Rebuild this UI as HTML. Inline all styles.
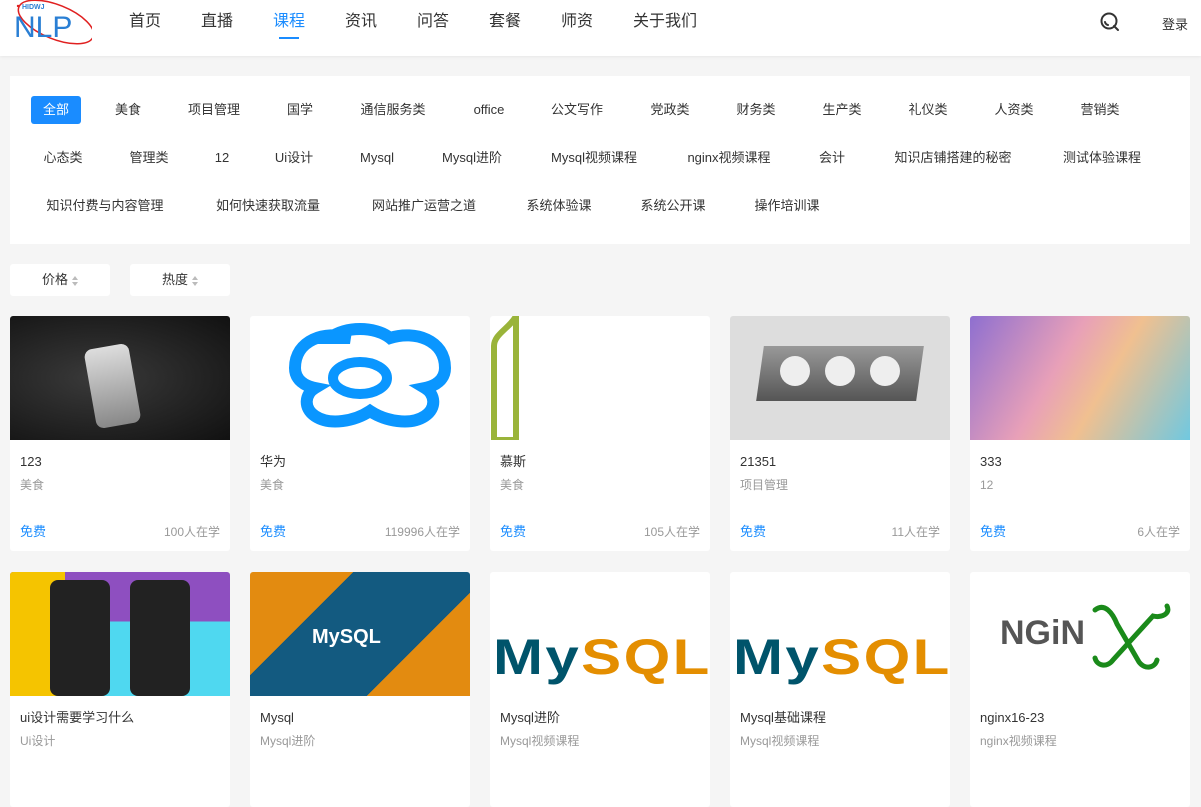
<!DOCTYPE html>
<html><head><meta charset="utf-8"><style>
*{margin:0;padding:0;box-sizing:border-box}
body{width:1201px;height:765px;overflow:hidden;background:#f5f5f5;font-family:"Liberation Sans","Noto Sans CJK SC",sans-serif;color:#333;position:relative}
.hd{position:absolute;left:0;top:0;width:1201px;height:56px;background:#fff;box-shadow:0 1px 3px rgba(0,0,0,.06)}
.nav{position:absolute;top:10px;font-size:16px;line-height:24px;color:#333}
.nav.on{color:#1a8cff}
.panel{position:absolute;left:10px;top:76px;width:1180px;height:168px;background:#fff}
.tag{position:absolute;font-size:13px;color:#333;line-height:28px;height:28px;transform:translateX(-50%);white-space:nowrap}
.tag.on{background:#1a8cff;color:#fff;border-radius:3px;padding:0 12px}
.sort{position:absolute;top:264px;width:100px;height:32px;background:#fff;border-radius:3px;font-size:13px;line-height:32px;text-align:center;color:#333}
.sort i{display:inline-block;vertical-align:middle;margin-left:4px;width:6px;height:10px;position:relative}
.sort i:before,.sort i:after{content:"";position:absolute;left:0;border-left:3px solid transparent;border-right:3px solid transparent}
.sort i:before{top:0;border-bottom:4px solid #bbb}.sort i:after{bottom:0;border-top:4px solid #bbb}
.card{position:absolute;width:220px;height:235px;background:#fff;border-radius:3px;overflow:hidden}
.img{height:124px;position:relative;overflow:hidden}
.t{position:absolute;left:10px;top:137px;font-size:13px;line-height:18px;color:#333}
.c{position:absolute;left:10px;top:161px;font-size:12px;line-height:17px;color:#999}
.f{position:absolute;left:10px;top:207px;font-size:13px;line-height:18px;color:#1a8cff}
.n{position:absolute;right:10px;top:207px;font-size:12px;line-height:18px;color:#999}
</style></head><body>
<div class="hd">
<svg style="position:absolute;left:8px;top:0" width="84" height="48"><ellipse cx="48" cy="22" rx="40" ry="17" fill="none" stroke="#e02020" stroke-width="1.5" transform="rotate(22 48 22)"/><text x="6" y="37" font-family="Liberation Sans" font-size="30" fill="#2a7fd4">NLP</text><text x="14" y="9" font-size="7" fill="#2a7fd4" font-family="Liberation Sans" font-weight="bold">HIDWJ</text><circle cx="10" cy="6" r="1.2" fill="#e02020"/></svg>
<span class="nav" style="left:129px">首页</span><span class="nav" style="left:201px">直播</span><span class="nav on" style="left:273px">课程</span><span class="nav" style="left:345px">资讯</span><span class="nav" style="left:417px">问答</span><span class="nav" style="left:489px">套餐</span><span class="nav" style="left:561px">师资</span><span class="nav" style="left:633px">关于我们</span>
<div style="position:absolute;left:279px;top:37px;width:20px;height:2px;background:#1a8cff"></div>
<svg style="position:absolute;left:1099px;top:11px" width="22" height="22"><circle cx="10" cy="10" r="7.5" fill="none" stroke="#333" stroke-width="2"/><path d="M15 15l4 4M6 11a4 4 0 0 0 3 3" stroke="#333" stroke-width="2" fill="none" stroke-linecap="round"/></svg>
<span style="position:absolute;left:1162px;top:14px;font-size:13px">登录</span>
</div>
<div class="panel">
<span class="tag on" style="left:46px;top:20px">全部</span><span class="tag" style="left:118px;top:20px">美食</span><span class="tag" style="left:204px;top:20px">项目管理</span><span class="tag" style="left:290px;top:20px">国学</span><span class="tag" style="left:383px;top:20px">通信服务类</span><span class="tag" style="left:479px;top:20px">office</span><span class="tag" style="left:567px;top:20px">公文写作</span><span class="tag" style="left:660px;top:20px">党政类</span><span class="tag" style="left:746px;top:20px">财务类</span><span class="tag" style="left:832px;top:20px">生产类</span><span class="tag" style="left:918px;top:20px">礼仪类</span><span class="tag" style="left:1004px;top:20px">人资类</span><span class="tag" style="left:1090px;top:20px">营销类</span>
<span class="tag" style="left:53px;top:68px">心态类</span><span class="tag" style="left:139px;top:68px">管理类</span><span class="tag" style="left:212px;top:68px">12</span><span class="tag" style="left:284px;top:68px">Ui设计</span><span class="tag" style="left:367px;top:68px">Mysql</span><span class="tag" style="left:462px;top:68px">Mysql进阶</span><span class="tag" style="left:584px;top:68px">Mysql视频课程</span><span class="tag" style="left:719px;top:68px">nginx视频课程</span><span class="tag" style="left:822px;top:68px">会计</span><span class="tag" style="left:943px;top:68px">知识店铺搭建的秘密</span><span class="tag" style="left:1092px;top:68px">测试体验课程</span>
<span class="tag" style="left:95px;top:116px">知识付费与内容管理</span><span class="tag" style="left:258px;top:116px">如何快速获取流量</span><span class="tag" style="left:414px;top:116px">网站推广运营之道</span><span class="tag" style="left:549px;top:116px">系统体验课</span><span class="tag" style="left:663px;top:116px">系统公开课</span><span class="tag" style="left:777px;top:116px">操作培训课</span>
</div>
<div class="sort" style="left:10px">价格<i></i></div><div class="sort" style="left:130px">热度<i></i></div>

<div class="card" style="left:10px;top:316px"><div class="img" style="background:radial-gradient(ellipse at 40% 50%,#3a3a3a,#111)"><div style="position:absolute;left:80px;top:30px;width:45px;height:80px;background:linear-gradient(#ddd,#888);border-radius:8px;transform:rotate(-10deg)"></div></div><div class="t">123</div><div class="c">美食</div><div class="f">免费</div><div class="n">100人在学</div></div>
<div class="card" style="left:250px;top:316px"><div class="img"><svg width="220" height="124"><path d="M80 22c15-12 45-12 60 0 25-8 55 2 55 30 0 12-10 18-20 20 10 6 12 20 0 28-15 10-40 5-55-5-15 10-40 15-55 5-12-8-10-22 0-28-10-2-20-8-20-20 0-28 30-38 55-30z" fill="none" stroke="#0a96ff" stroke-width="12"/><ellipse cx="110" cy="62" rx="27" ry="16" fill="none" stroke="#0a96ff" stroke-width="10"/></svg></div><div class="t">华为</div><div class="c">美食</div><div class="f">免费</div><div class="n">119996人在学</div></div>
<div class="card" style="left:490px;top:316px"><div class="img"><svg width="40" height="124"><path d="M4 124V30c0-12 16-18 22-30v124z" fill="none" stroke="#9ab43a" stroke-width="6"/></svg></div><div class="t">慕斯</div><div class="c">美食</div><div class="f">免费</div><div class="n">105人在学</div></div>
<div class="card" style="left:730px;top:316px"><div class="img" style="background:#ddd"><div style="position:absolute;left:30px;top:30px;width:160px;height:55px;background:linear-gradient(#999,#555);transform:skewX(-8deg)"></div><div style="position:absolute;left:50px;top:40px;width:30px;height:30px;border-radius:50%;background:#eee"></div><div style="position:absolute;left:95px;top:40px;width:30px;height:30px;border-radius:50%;background:#eee"></div><div style="position:absolute;left:140px;top:40px;width:30px;height:30px;border-radius:50%;background:#eee"></div></div><div class="t">21351</div><div class="c">项目管理</div><div class="f">免费</div><div class="n">11人在学</div></div>
<div class="card" style="left:970px;top:316px"><div class="img" style="background:linear-gradient(120deg,#8e6fd0,#e8a0b8 40%,#f0c090 60%,#70c8e0)"></div><div class="t">333</div><div class="c">12</div><div class="f">免费</div><div class="n">6人在学</div></div>

<div class="card" style="left:10px;top:572px"><div class="img" style="background:linear-gradient(90deg,#f5c400 0 25%,transparent 25%),linear-gradient(#8e4fc0 0 40%,#4fd8f0 40%)"><div style="position:absolute;left:40px;top:8px;width:60px;height:116px;background:#222;border-radius:8px"></div><div style="position:absolute;left:120px;top:8px;width:60px;height:116px;background:#222;border-radius:8px"></div></div><div class="t">ui设计需要学习什么</div><div class="c">Ui设计</div></div>
<div class="card" style="left:250px;top:572px"><div class="img" style="background:linear-gradient(135deg,#e38b10 0 30%,#135a80 30% 70%,#e38b10 70%)"><div style="position:absolute;left:62px;top:54px;color:#fff;font-size:20px;font-weight:bold">MySQL</div></div><div class="t">Mysql</div><div class="c">Mysql进阶</div></div>
<div class="card" style="left:490px;top:572px"><div class="img"><div style="position:absolute;left:3px;top:60px;font-size:50px;line-height:50px;font-weight:bold;letter-spacing:2px;transform:scaleX(1.2);transform-origin:left"><span style="color:#00546b">My</span><span style="color:#e48e00">SQL</span></div></div><div class="t">Mysql进阶</div><div class="c">Mysql视频课程</div></div>
<div class="card" style="left:730px;top:572px"><div class="img"><div style="position:absolute;left:3px;top:60px;font-size:50px;line-height:50px;font-weight:bold;letter-spacing:2px;transform:scaleX(1.2);transform-origin:left"><span style="color:#00546b">My</span><span style="color:#e48e00">SQL</span></div></div><div class="t">Mysql基础课程</div><div class="c">Mysql视频课程</div></div>
<div class="card" style="left:970px;top:572px"><div class="img"><div style="position:absolute;left:30px;top:44px;font-size:34px;line-height:34px;font-weight:bold;color:#555">NGiN</div><svg style="position:absolute;left:115px;top:30px" width="90" height="70"><path d="M10 8c10-8 18 4 22 14l22 38c6 8 16 6 18-2M82 4c4 8-6 12-14 10L28 58c-6 8-16 6-18-2" fill="none" stroke="#1a8a1a" stroke-width="5" stroke-linecap="round"/></svg></div><div class="t">nginx16-23</div><div class="c">nginx视频课程</div></div>
</body></html>
